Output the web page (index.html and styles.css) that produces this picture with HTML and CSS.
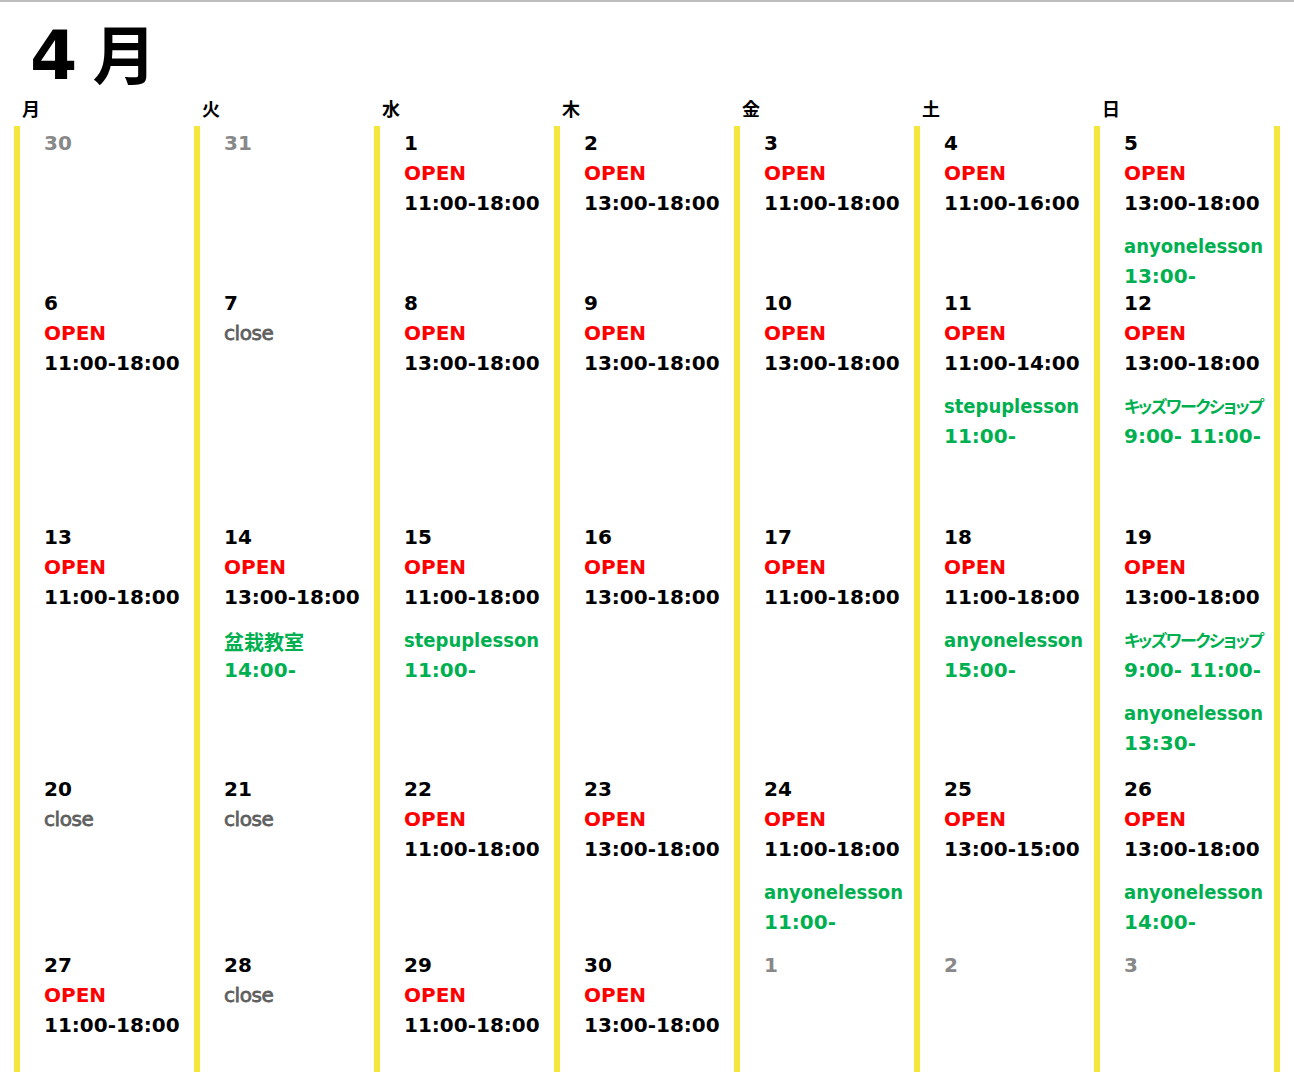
FILE: index.html
```html
<!DOCTYPE html>
<html lang="ja">
<head>
<meta charset="utf-8">
<title>4月</title>
<link rel="stylesheet" href="styles.css">
</head>
<body>
<div class="page">
  <h1 class="title"><span class="title-num">4</span> <span class="title-month">月</span></h1>
  <div class="weekdays">
    <div class="wd">月</div><div class="wd">火</div><div class="wd">水</div><div class="wd">木</div><div class="wd">金</div><div class="wd">土</div><div class="wd">日</div>
  </div>
  <div class="cal">
    <!-- row 1 -->
    <div class="cell"><div class="d muted">30</div></div>
    <div class="cell"><div class="d muted">31</div></div>
    <div class="cell"><div class="d">1</div><div class="open">OPEN</div><div class="t">11:00-18:00</div></div>
    <div class="cell"><div class="d">2</div><div class="open">OPEN</div><div class="t">13:00-18:00</div></div>
    <div class="cell"><div class="d">3</div><div class="open">OPEN</div><div class="t">11:00-18:00</div></div>
    <div class="cell"><div class="d">4</div><div class="open">OPEN</div><div class="t">11:00-16:00</div></div>
    <div class="cell last"><div class="d">5</div><div class="open">OPEN</div><div class="t">13:00-18:00</div>
      <div class="ev"><div class="ev-name">anyonelesson</div><div class="ev-time">13:00-</div></div></div>
    <!-- row 2 -->
    <div class="cell"><div class="d">6</div><div class="open">OPEN</div><div class="t">11:00-18:00</div></div>
    <div class="cell"><div class="d">7</div><div class="close">close</div></div>
    <div class="cell"><div class="d">8</div><div class="open">OPEN</div><div class="t">13:00-18:00</div></div>
    <div class="cell"><div class="d">9</div><div class="open">OPEN</div><div class="t">13:00-18:00</div></div>
    <div class="cell"><div class="d">10</div><div class="open">OPEN</div><div class="t">13:00-18:00</div></div>
    <div class="cell"><div class="d">11</div><div class="open">OPEN</div><div class="t">11:00-14:00</div>
      <div class="ev"><div class="ev-name">stepuplesson</div><div class="ev-time">11:00-</div></div></div>
    <div class="cell last"><div class="d">12</div><div class="open">OPEN</div><div class="t">13:00-18:00</div>
      <div class="ev"><div class="ev-name kana">キッズワークショップ</div><div class="ev-time">9:00- 11:00-</div></div></div>
    <!-- row 3 -->
    <div class="cell"><div class="d">13</div><div class="open">OPEN</div><div class="t">11:00-18:00</div></div>
    <div class="cell"><div class="d">14</div><div class="open">OPEN</div><div class="t">13:00-18:00</div>
      <div class="ev"><div class="ev-name kanji">盆栽教室</div><div class="ev-time">14:00-</div></div></div>
    <div class="cell"><div class="d">15</div><div class="open">OPEN</div><div class="t">11:00-18:00</div>
      <div class="ev"><div class="ev-name">stepuplesson</div><div class="ev-time">11:00-</div></div></div>
    <div class="cell"><div class="d">16</div><div class="open">OPEN</div><div class="t">13:00-18:00</div></div>
    <div class="cell"><div class="d">17</div><div class="open">OPEN</div><div class="t">11:00-18:00</div></div>
    <div class="cell"><div class="d">18</div><div class="open">OPEN</div><div class="t">11:00-18:00</div>
      <div class="ev"><div class="ev-name">anyonelesson</div><div class="ev-time">15:00-</div></div></div>
    <div class="cell last"><div class="d">19</div><div class="open">OPEN</div><div class="t">13:00-18:00</div>
      <div class="ev"><div class="ev-name kana">キッズワークショップ</div><div class="ev-time">9:00- 11:00-</div></div>
      <div class="ev"><div class="ev-name">anyonelesson</div><div class="ev-time">13:30-</div></div></div>
    <!-- row 4 -->
    <div class="cell"><div class="d">20</div><div class="close">close</div></div>
    <div class="cell"><div class="d">21</div><div class="close">close</div></div>
    <div class="cell"><div class="d">22</div><div class="open">OPEN</div><div class="t">11:00-18:00</div></div>
    <div class="cell"><div class="d">23</div><div class="open">OPEN</div><div class="t">13:00-18:00</div></div>
    <div class="cell"><div class="d">24</div><div class="open">OPEN</div><div class="t">11:00-18:00</div>
      <div class="ev"><div class="ev-name">anyonelesson</div><div class="ev-time">11:00-</div></div></div>
    <div class="cell"><div class="d">25</div><div class="open">OPEN</div><div class="t">13:00-15:00</div></div>
    <div class="cell last"><div class="d">26</div><div class="open">OPEN</div><div class="t">13:00-18:00</div>
      <div class="ev"><div class="ev-name">anyonelesson</div><div class="ev-time">14:00-</div></div></div>
    <!-- row 5 -->
    <div class="cell"><div class="d">27</div><div class="open">OPEN</div><div class="t">11:00-18:00</div></div>
    <div class="cell"><div class="d">28</div><div class="close">close</div></div>
    <div class="cell"><div class="d">29</div><div class="open">OPEN</div><div class="t">11:00-18:00</div></div>
    <div class="cell"><div class="d">30</div><div class="open">OPEN</div><div class="t">13:00-18:00</div></div>
    <div class="cell"><div class="d muted">1</div></div>
    <div class="cell"><div class="d muted">2</div></div>
    <div class="cell last"><div class="d muted">3</div></div>
  </div>
</div>
</body>
</html>
```

FILE: styles.css
```css
html, body {
  margin: 0;
  padding: 0;
  background: #fff;
}
body {
  font-family: "DejaVu Sans", "Noto Sans CJK JP", sans-serif;
  color: #000;
  overflow: hidden;
}
.page {
  border-top: 2px solid #bdbdbd;
  height: 1070px;
}
.title {
  margin: 0;
  padding: 7px 0 0 30px;
  height: 87px;
  line-height: 84px;
  font-weight: bold;
  white-space: nowrap;
}
.title-num {
  font-family: "DejaVu Sans", sans-serif;
  font-size: 68px;
}
.title-month {
  font-family: "Noto Sans CJK JP", sans-serif;
  font-size: 64px;
  margin-left: 4px;
}
.weekdays {
  display: grid;
  grid-template-columns: repeat(7, 180px);
  margin-left: 14px;
  padding-bottom: 6px;
}
.wd {
  padding-left: 8px;
  font-family: "Noto Sans CJK JP", sans-serif;
  font-weight: bold;
  font-size: 18px;
  line-height: 24px;
}
.cal {
  display: grid;
  grid-template-columns: repeat(6, 180px) 186px;
  grid-template-rows: 160px 234px 252px 176px 130px;
  margin-left: 14px;
  width: 1266px;
}
.cell {
  border-left: 6px solid #f5e63e;
  padding: 2px 0 0 24px;
  font-weight: bold;
  font-size: 20px;
  line-height: 30px;
  white-space: nowrap;
}
.cell.last {
  border-right: 6px solid #f5e63e;
}
.d { color: #000; }
.d.muted { color: #888; }
.open { color: #ff0000; }
.t { color: #000; }
.close {
  color: #5f5f5f;
  font-weight: normal;
  -webkit-text-stroke: 0.8px #5f5f5f;
  letter-spacing: -0.4px;
}
.ev {
  margin-top: 13px;
  color: #00b050;
}
.ev-name {
  font-family: "DejaVu Sans Condensed", "DejaVu Sans", sans-serif;
  font-stretch: condensed;
}
.ev-name.kana {
  font-family: "Noto Sans CJK JP", sans-serif;
  font-size: 17px;
  font-feature-settings: "palt";
  letter-spacing: -1.5px;
}
.ev-name.kanji {
  font-family: "Noto Sans CJK JP", sans-serif;
  font-size: 20px;
  line-height: 34px;
  margin-bottom: -4px;
}
```
